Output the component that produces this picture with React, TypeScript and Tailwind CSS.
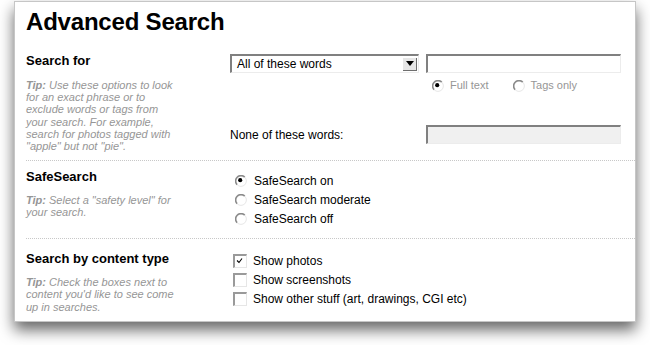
import React from 'react';

const font = { fontFamily: '"Liberation Sans", Arial, sans-serif' };

const Radio: React.FC<{ checked?: boolean }> = ({ checked = false }) => (
  <svg width="12" height="12" viewBox="0 0 12 12" className="shrink-0">
    <circle cx="6" cy="6" r="5.5" fill="#fff" />
    <path d="M2.2 9.8 A5.3 5.3 0 0 1 9.8 2.2" stroke="#8a8a8a" strokeWidth="1.6" fill="none" />
    <path d="M9.8 2.2 A5.3 5.3 0 0 1 2.2 9.8" stroke="#e6e6e6" strokeWidth="1" fill="none" />
    {checked && <circle cx="5.2" cy="5.2" r="2.1" fill="#000" />}
  </svg>
);

const Checkbox: React.FC<{ checked?: boolean }> = ({ checked = false }) => (
  <div className="w-[14px] h-[14px] shrink-0 bg-white border-t-2 border-l-2 border-t-[#9a9a9a] border-l-[#9a9a9a] border-r border-b border-r-[#e6e6e6] border-b-[#e6e6e6] flex items-start justify-start">
    {checked && (
      <svg width="10" height="10" viewBox="0 0 10 10">
        <path d="M2 4.5 L4 6.5 L7 2.5" stroke="#000" strokeWidth="1.1" fill="none" />
      </svg>
    )}
  </div>
);

// tip text: bold "Tip:" lead-in, then the rest wraps in the narrow column
const Tip: React.FC<{ text: string }> = ({ text }) => (
  <p className="w-[154px] text-[11px] leading-[12.2px] italic text-[#969696]">
    <b className="font-bold">Tip:</b>
    <span>{' ' + text}</span>
  </p>
);

const inset =
  'h-[19px] border-t-2 border-l-2 border-t-[#808080] border-l-[#808080] border-r border-b border-r-[#ececec] border-b-[#ececec]';

export default function App() {
  return (
    <div className="w-[650px] h-[345px] bg-white overflow-hidden" style={font}>
      <div className="ml-[14px] mt-[1px] w-[622px] h-[321px] bg-white border border-[#c6c6c6] shadow-[0_8px_14px_rgba(0,0,0,0.6)] pl-[11px] pt-[6px]">
        <h1 className="text-[24px] leading-[28px] font-bold text-black tracking-[-0.2px]">Advanced Search</h1>

        {/* Search for */}
        <div className="flex items-start pt-[17px] pb-[8px] border-b border-dotted border-[#c8c8c8]">
          <div className="w-[204px] shrink-0">
            <h2 className="text-[13px] leading-[16px] font-bold text-black">Search for</h2>
            <div className="mt-[10px]">
              <Tip text={'Use these options to look for an exact phrase or to exclude words or tags from your search. For example, search for photos tagged with "apple" but not "pie".'} />
            </div>
          </div>
          <div className="flex flex-col mt-[1px]">
            <div className="flex gap-[7px]">
              <div className={`${inset} w-[189px] bg-white flex items-center justify-between pl-[5px] pr-[1px]`}>
                <span className="text-[12px] text-black">All of these words</span>
                <div className="w-[14px] h-[13px] bg-[#e6e6e6] border-r border-b border-[#6e6e6e] flex items-center justify-center">
                  <svg width="8" height="5" viewBox="0 0 8 5">
                    <path d="M0 0 L8 0 L4 5 Z" fill="#000" />
                  </svg>
                </div>
              </div>
              <div className={`${inset} w-[195px] bg-white`} />
            </div>
            <div className="flex items-center ml-[202px] mt-[6px] h-[13px] text-[11px] text-[#969696]">
              <Radio checked />
              <span className="ml-[6px]">Full text</span>
              <span className="ml-[24px]">
                <Radio />
              </span>
              <span className="ml-[6px]">Tags only</span>
            </div>
            <div className="flex items-center gap-[7px] mt-[33px]">
              <span className="w-[189px] text-[12px] text-black">None of these words:</span>
              <div className={`${inset} w-[195px] bg-[#f0f0f0]`} />
            </div>
          </div>
        </div>

        {/* SafeSearch */}
        <div className="flex items-start pt-[8px] pb-[10px] border-b border-dotted border-[#c8c8c8]">
          <div className="w-[204px] shrink-0">
            <h2 className="text-[13px] leading-[16px] font-bold text-black">SafeSearch</h2>
            <div className="mt-[9px]">
              <Tip text={'Select a "safety level" for your search.'} />
            </div>
          </div>
          <div className="flex flex-col mt-[2px] ml-[5px] text-[12px] text-black">
            {[
              ['SafeSearch on', true],
              ['SafeSearch moderate', false],
              ['SafeSearch off', false],
            ].map(([label, on]) => (
              <label key={label as string} className="flex items-center h-[19px] gap-[7px]">
                <Radio checked={on as boolean} />
                <span>{label as string}</span>
              </label>
            ))}
          </div>
        </div>

        {/* Content type */}
        <div className="flex items-start pt-[12px]">
          <div className="w-[204px] shrink-0">
            <h2 className="text-[13px] leading-[16px] font-bold text-black">Search by content type</h2>
            <div className="mt-[9px]">
              <Tip text={"Check the boxes next to content you'd like to see come up in searches."} />
            </div>
          </div>
          <div className="flex flex-col ml-[3px] text-[12px] text-black">
            {[
              ['Show photos', true],
              ['Show screenshots', false],
              ['Show other stuff (art, drawings, CGI etc)', false],
            ].map(([label, on]) => (
              <label key={label as string} className="flex items-center h-[19px] gap-[6px]">
                <Checkbox checked={on as boolean} />
                <span>{label as string}</span>
              </label>
            ))}
          </div>
        </div>
      </div>
    </div>
  );
}
